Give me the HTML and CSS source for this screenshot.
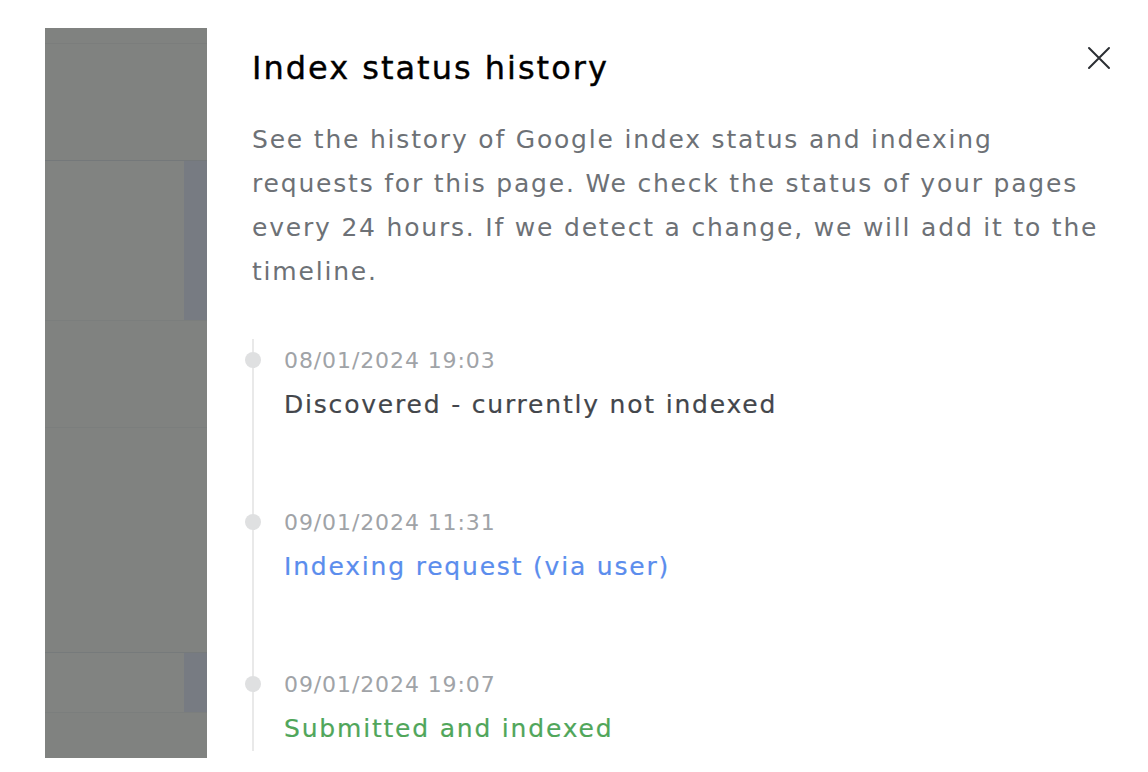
FILE: index.html
```html
<!DOCTYPE html>
<html lang="en">
<head>
    <meta charset="UTF-8">
    <meta name="viewport" content="width=device-width, initial-scale=1.0">
    <title>Index status history</title>
    <link rel="stylesheet" href="styles.css">
</head>
<body>
    <div class="screen">
        <!-- dimmed page behind the drawer -->
        <div class="dim">
            <div class="dim-header"></div>
            <div class="dim-row tall">
                <div class="dim-main"></div>
                <div class="dim-strip"></div>
            </div>
            <div class="dim-row mid"></div>
            <div class="dim-row big"></div>
            <div class="dim-row short">
                <div class="dim-main"></div>
                <div class="dim-strip"></div>
            </div>
            <div class="dim-row rest"></div>
        </div>

        <div class="drawer">
            <button class="close" aria-label="Close">
                <svg width="24" height="24" viewBox="0 0 24 24" fill="none" stroke="#2b2e33" stroke-width="2" stroke-linecap="round">
                    <path d="M2 2 L22 22 M22 2 L2 22"/>
                </svg>
            </button>
            <h1>Index status history</h1>
            <p class="intro">See the history of Google index status and indexing requests for this page. We check the status of your pages every 24 hours. If we detect a change, we will add it to the timeline.</p>

            <ul class="timeline">
                <li>
                    <span class="date">08/01/2024 19:03</span>
                    <span class="status">Discovered - currently not indexed</span>
                </li>
                <li>
                    <span class="date">09/01/2024 11:31</span>
                    <span class="status request">Indexing request (via user)</span>
                </li>
                <li>
                    <span class="date">09/01/2024 19:07</span>
                    <span class="status indexed">Submitted and indexed</span>
                </li>
            </ul>
        </div>
    </div>
</body>
</html>
```

FILE: styles.css
```css
body {
    margin: 0;
    background: #fff;
    font-family: "DejaVu Sans", "Open Sans", sans-serif;
}
.screen {
    display: flex;
    padding: 28px 0 0 45px;
    height: 744px;
    overflow: hidden;
}

/* dimmed background page */
.dim {
    width: 162px;
    height: 730px;
    flex: none;
    background: #808280;
    display: flex;
    flex-direction: column;
}
.dim-header {
    height: 133px;
    border-top: 15px solid #808280;
    box-shadow: inset 0 1px 0 #7b7d7c;
    border-bottom: 1px solid #74787a;
    box-sizing: border-box;
}
.dim-row {
    display: flex;
    border-bottom: 1px solid #7b7e7d;
}
.dim-row.tall { height: 159px; }
.dim-row.mid { height: 106px; }
.dim-row.big { height: 224px; border-bottom-color: #767a7b; }
.dim-row.short { height: 59px; }
.dim-row.rest { flex: 1; border: none; }
.dim-main {
    flex: 1;
    margin-left: 3px;
    background: #818381;
}
.dim-strip {
    width: 23px;
    background: #777b82;
}

/* drawer */
.drawer {
    position: relative;
    flex: 1;
    padding: 20px 38px 0 45px;
}
.close {
    position: absolute;
    top: 18px;
    right: 37px;
    border: none;
    background: none;
    padding: 0;
    width: 24px;
    height: 24px;
}
h1 {
    margin: 0;
    font-size: 32px;
    line-height: 40px;
    font-weight: normal;
    color: #000;
    letter-spacing: 2px;
    -webkit-text-stroke: 0.4px #000;
}
.intro {
    margin: 30px 0 0;
    font-size: 25px;
    line-height: 44px;
    color: #6d7176;
    letter-spacing: 1.8px;
}

.timeline {
    list-style: none;
    margin: 45px 0 0;
    padding: 0;
    border-left: 2px solid #e9e9e9;
    width: 700px;
}
.timeline li {
    position: relative;
    padding-left: 30px;
    margin-bottom: 74px;
}
.timeline li:last-child {
    margin-bottom: 0;
}
.timeline li::before {
    content: "";
    position: absolute;
    left: -9px;
    top: 13px;
    width: 16px;
    height: 16px;
    border-radius: 50%;
    background: #dfe0e1;
}
.date {
    display: block;
    font-size: 22px;
    line-height: 44px;
    color: #a0a3a7;
    letter-spacing: 0.9px;
}
.status {
    display: block;
    font-size: 25px;
    line-height: 44px;
    color: #43464b;
    letter-spacing: 1.8px;
    -webkit-text-stroke: 0.2px currentColor;
}
.status.request { color: #5b8ded; }
.status.indexed { color: #50a65a; }
```
